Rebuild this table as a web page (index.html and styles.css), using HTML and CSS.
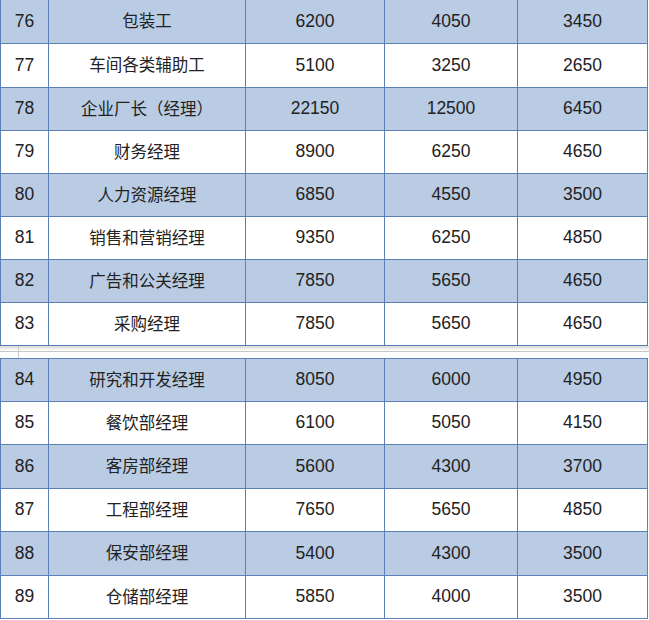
FILE: index.html
```html
<!DOCTYPE html>
<html lang="zh">
<head>
<meta charset="utf-8">
<title>工资表</title>
<link rel="stylesheet" href="styles.css">
</head>
<body>
<div class="sheet sheet-top">
  <div class="row band"><div class="c num">76</div><div class="c name">包装工</div><div class="c num">6200</div><div class="c num">4050</div><div class="c num">3450</div></div>
  <div class="row"><div class="c num">77</div><div class="c name">车间各类辅助工</div><div class="c num">5100</div><div class="c num">3250</div><div class="c num">2650</div></div>
  <div class="row band r43"><div class="c num">78</div><div class="c name">企业厂长（经理）</div><div class="c num">22150</div><div class="c num">12500</div><div class="c num">6450</div></div>
  <div class="row r43"><div class="c num">79</div><div class="c name">财务经理</div><div class="c num">8900</div><div class="c num">6250</div><div class="c num">4650</div></div>
  <div class="row band r43"><div class="c num">80</div><div class="c name">人力资源经理</div><div class="c num">6850</div><div class="c num">4550</div><div class="c num">3500</div></div>
  <div class="row r43"><div class="c num">81</div><div class="c name">销售和营销经理</div><div class="c num">9350</div><div class="c num">6250</div><div class="c num">4850</div></div>
  <div class="row band r43"><div class="c num">82</div><div class="c name">广告和公关经理</div><div class="c num">7850</div><div class="c num">5650</div><div class="c num">4650</div></div>
  <div class="row r43"><div class="c num">83</div><div class="c name">采购经理</div><div class="c num">7850</div><div class="c num">5650</div><div class="c num">4650</div></div>
</div>
<div class="pagebreak"><span class="tick"></span></div>
<div class="sheet">
  <div class="row band r43"><div class="c num">84</div><div class="c name">研究和开发经理</div><div class="c num">8050</div><div class="c num">6000</div><div class="c num">4950</div></div>
  <div class="row r43"><div class="c num">85</div><div class="c name">餐饮部经理</div><div class="c num">6100</div><div class="c num">5050</div><div class="c num">4150</div></div>
  <div class="row band"><div class="c num">86</div><div class="c name">客房部经理</div><div class="c num">5600</div><div class="c num">4300</div><div class="c num">3700</div></div>
  <div class="row r43"><div class="c num">87</div><div class="c name">工程部经理</div><div class="c num">7650</div><div class="c num">5650</div><div class="c num">4850</div></div>
  <div class="row band"><div class="c num">88</div><div class="c name">保安部经理</div><div class="c num">5400</div><div class="c num">4300</div><div class="c num">3500</div></div>
  <div class="row r43"><div class="c num">89</div><div class="c name">仓储部经理</div><div class="c num">5850</div><div class="c num">4000</div><div class="c num">3500</div></div>
</div>
</body>
</html>
```
FILE: styles.css
```css
html, body {
  margin: 0;
  padding: 0;
  background: #ffffff;
}
body {
  width: 649px;
  height: 620px;
  overflow: hidden;
  color: #222222;
  font-family: "Liberation Sans", "Noto Sans CJK SC", sans-serif;
}
.sheet {
  width: 648px;
  box-sizing: border-box;
  border-left: 1px solid #5b80b8;
  border-top: 1px solid #5b80b8;
}
.sheet-top {
  margin-top: -1px;
}
.row {
  display: grid;
  grid-template-columns: 48px 197px 139px 133px 130px;
  height: 44px;
  background: #ffffff;
}
.row.r43 {
  height: 43px;
}
.row.band {
  background: #b9cce4;
}
.c {
  box-sizing: border-box;
  border-right: 1px solid #5b80b8;
  border-bottom: 1px solid #5b80b8;
  display: flex;
  align-items: center;
  justify-content: center;
}
.num {
  font-family: "Liberation Sans", sans-serif;
  font-size: 17.5px;
  padding-bottom: 1px;
}
.name {
  font-family: "Noto Sans CJK SC", sans-serif;
  font-size: 16.5px;
  padding-bottom: 3px;
}
.pagebreak {
  position: relative;
  height: 12px;
  background: linear-gradient(#d8d8d8 0, #f2f2f2 3px, #ffffff 5px, #ffffff 100%);
}
.pagebreak::after {
  content: "";
  position: absolute;
  left: 0;
  right: 0;
  top: 5px;
  height: 1px;
  background: #c8c8c8;
}
.tick {
  position: absolute;
  left: 18px;
  top: 0;
  width: 1px;
  height: 12px;
  background: #c8c8c8;
}
```
